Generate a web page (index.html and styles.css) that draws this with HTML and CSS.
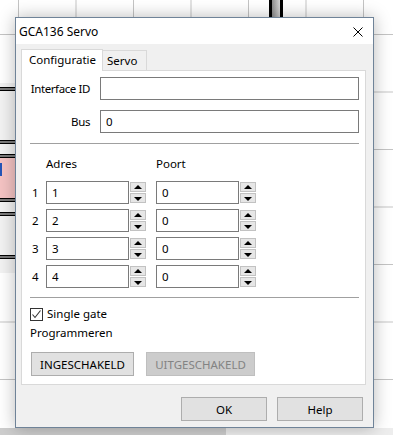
FILE: index.html
```html
<!DOCTYPE html>
<html lang="nl">
<head>
    <meta charset="UTF-8">
    <meta name="viewport" content="width=device-width, initial-scale=1.0">
    <title>GCA136 Servo</title>
    <link rel="stylesheet" href="styles.css">
</head>
<body>
    <!-- track plan behind the dialog -->
    <div class="track-v"></div>
    <div class="edge-block">
        <div class="rail rail-1"></div>
        <div class="rail rail-2"></div>
        <div class="rail rail-3"></div>
        <div class="block-pink"><span class="block-nr"></span></div>
        <div class="rail rail-4"></div>
        <div class="rail rail-5"></div>
        <div class="rail rail-6"></div>
    </div>
    <div class="hscroll"></div>

    <div class="dialog">
        <div class="titlebar">
            <span class="title">GCA136 Servo</span>
            <svg class="close" width="10" height="10" viewBox="0 0 10 10">
                <path d="M0.5 0.5 L9.5 9.5 M9.5 0.5 L0.5 9.5" stroke="#000" stroke-width="1" fill="none"/>
            </svg>
        </div>

        <div class="dialog-body">
            <div class="tabs">
                <div class="tab active">Configuratie</div>
                <div class="tab">Servo</div>
            </div>

            <div class="panel">
                <div class="field-grid">
                    <label for="iid">Interface ID</label>
                    <input class="text" id="iid" type="text" value="">
                    <label for="bus">Bus</label>
                    <input class="text" id="bus" type="text" value="0">
                </div>

                <div class="sep"></div>

                <div class="addr-grid">
                    <span></span><span class="colhead">Adres</span><span></span><span class="colhead">Poort</span><span></span>

                    <span class="nr">1</span>
                    <input class="text" type="text" value="1">
                    <div class="spin"><span class="up"></span><span class="down"></span></div>
                    <input class="text" type="text" value="0">
                    <div class="spin"><span class="up"></span><span class="down"></span></div>

                    <span class="nr">2</span>
                    <input class="text" type="text" value="2">
                    <div class="spin"><span class="up"></span><span class="down"></span></div>
                    <input class="text" type="text" value="0">
                    <div class="spin"><span class="up"></span><span class="down"></span></div>

                    <span class="nr">3</span>
                    <input class="text" type="text" value="3">
                    <div class="spin"><span class="up"></span><span class="down"></span></div>
                    <input class="text" type="text" value="0">
                    <div class="spin"><span class="up"></span><span class="down"></span></div>

                    <span class="nr">4</span>
                    <input class="text" type="text" value="4">
                    <div class="spin"><span class="up"></span><span class="down"></span></div>
                    <input class="text" type="text" value="0">
                    <div class="spin"><span class="up"></span><span class="down"></span></div>
                </div>

                <div class="sep sep-2"></div>

                <label class="check">
                    <span class="box">
                        <svg width="11" height="11" viewBox="0 0 11 11">
                            <path d="M1.5 5.5 L4 8.5 L9.5 1.5" stroke="#333" stroke-width="1.1" fill="none"/>
                        </svg>
                    </span>
                    Single gate
                </label>
                <div class="prog-label">Programmeren</div>
                <div class="prog-buttons">
                    <button class="btn">INGESCHAKELD</button>
                    <button class="btn" disabled>UITGESCHAKELD</button>
                </div>
            </div>

            <div class="footer">
                <button class="btn btn-wide">OK</button>
                <button class="btn btn-wide">Help</button>
            </div>
        </div>
    </div>
</body>
</html>
```

FILE: styles.css
```css
body {
    margin: 0;
    width: 393px;
    height: 435px;
    overflow: hidden;
    position: relative;
    font-family: "Noto Sans", "Open Sans", sans-serif;
    font-size: 11.5px;
    color: #000;
    background-color: #fff;
    background-image:
        linear-gradient(to right, #c4c4c4 1px, transparent 1px),
        linear-gradient(to bottom, #c4c4c4 1px, transparent 1px);
    background-size: 57.5px 57.5px;
    background-position: 18px 34px;
}

/* Track plan pieces peeking out behind the dialog */
.track-v {
    position: absolute;
    left: 269px;
    top: 0;
    width: 8px;
    height: 17px;
    border-left: 3px solid #000;
    border-right: 3px solid #000;
    background: linear-gradient(to right, #8c8c8c, #d4d4d4);
}

.edge-block {
    position: absolute;
    left: 0;
    top: 83px;
    width: 15px;
    height: 190px;
    background: #f2f2f2;
}

.rail {
    position: absolute;
    left: 0;
    width: 15px;
    height: 2px;
    border-top: 1px solid #000;
    border-bottom: 1px solid #000;
    background: #7a7a7a;
}

.rail-1 { top: 4px; }
.rail-2 { top: 57px; }
.rail-3 { top: 71px; }
.rail-4 { top: 115px; }
.rail-5 { top: 129px; }
.rail-6 { top: 172px; }

.block-pink {
    position: absolute;
    left: 0;
    top: 75px;
    width: 15px;
    height: 40px;
    background: #f4c3c3;
}

/* only the right stem of the block number shows */
.block-nr {
    position: absolute;
    left: 0;
    top: 5px;
    width: 2px;
    height: 13px;
    background: #2456b8;
}

.hscroll {
    position: absolute;
    left: 0;
    top: 428px;
    width: 393px;
    height: 7px;
    background: linear-gradient(to right, #cdcdcd 226px, #ededed 226px);
}

/* Dialog window */
.dialog {
    position: absolute;
    left: 15px;
    top: 17px;
    width: 359px;
    height: 411px;
    box-sizing: border-box;
    border: 1px solid #6f8398;
    background: #f0f0f0;
    box-shadow: 0 0 16px rgba(0, 0, 0, 0.28);
    display: flex;
    flex-direction: column;
}

.titlebar {
    height: 26px;
    background: #fff;
    display: flex;
    align-items: center;
    justify-content: space-between;
    padding: 0 10px 0 3px;
    font-size: 12px;
}

.close {
    display: block;
    margin-top: 1px;
}

.dialog-body {
    flex: 1;
    padding: 5px 7px 0 5px;
}

.tabs {
    display: flex;
    align-items: flex-end;
    height: 21px;
}

.tab {
    box-sizing: border-box;
    height: 20px;
    width: 44px;
    padding-left: 4px;
    border: 1px solid #d9d9d9;
    border-bottom: none;
    border-left: none;
    background: #f0f0f0;
    line-height: 19px;
}

.tab.active {
    position: relative;
    z-index: 1;
    width: 82px;
    height: 22px;
    margin-bottom: -1px;
    padding-left: 7px;
    border-left: 1px solid #d9d9d9;
    background: #fff;
    line-height: 19px;
}

.panel {
    box-sizing: border-box;
    width: 345px;
    height: 315px;
    border: 1px solid #d9d9d9;
    background: #fff;
    padding: 6px 6px 0 8px;
}

.field-grid {
    display: grid;
    grid-template-columns: 60px 259px;
    column-gap: 10px;
    row-gap: 10px;
    align-items: center;
}

.field-grid label {
    text-align: right;
    white-space: nowrap;
    letter-spacing: -0.4px;
}

input.text {
    box-sizing: border-box;
    height: 23px;
    width: 100%;
    margin: 0;
    border: 1px solid #7a7a7a;
    padding: 0 0 0 5px;
    font-family: inherit;
    font-size: 11.5px;
    color: #000;
    background: #fff;
    outline: none;
}

.sep {
    height: 1px;
    width: 329px;
    background: #a0a0a0;
    margin-top: 10px;
}

.addr-grid {
    display: grid;
    grid-template-columns: 16px 83px 27px 83px 17px;
    row-gap: 5px;
    align-items: center;
    margin-top: 10px;
}

.colhead {
    line-height: 16px;
    margin: 2px 0 4px;
}

.nr {
    padding-left: 2px;
}

.spin {
    box-sizing: border-box;
    width: 16px;
    height: 23px;
    margin-left: 1px;
    padding: 1px 0;
    display: flex;
    flex-direction: column;
    gap: 1px;
}

.spin span {
    position: relative;
    flex: 1;
    border: 1px solid #c2c2c2;
    background: #e6e6e6;
}

.spin span::after {
    content: "";
    position: absolute;
    left: 3px;
    top: 2px;
    border-left: 4px solid transparent;
    border-right: 4px solid transparent;
}

.spin .up::after {
    border-bottom: 4px solid #000;
}

.spin .down::after {
    top: 3px;
    border-top: 4px solid #000;
}

.sep-2 {
    margin-top: 9px;
}

.check {
    display: flex;
    align-items: center;
    gap: 4px;
    margin-top: 8px;
    line-height: 16px;
}

.box {
    box-sizing: border-box;
    width: 13px;
    height: 13px;
    border: 1px solid #333;
    display: flex;
    align-items: center;
    justify-content: center;
}

.box svg {
    display: block;
}

.prog-label {
    margin-top: 3px;
    line-height: 16px;
}

.prog-buttons {
    display: flex;
    gap: 12px;
    margin-top: 11px;
    padding-left: 1px;
}

.btn {
    box-sizing: border-box;
    height: 24px;
    padding: 0 8px;
    border: 1px solid #adadad;
    background: #e1e1e1;
    font-family: inherit;
    font-size: 11.5px;
    color: #000;
}

.prog-buttons .btn:first-child {
    width: 103px;
}

.prog-buttons .btn:last-child {
    width: 109px;
}

.btn:disabled {
    background: #cccccc;
    border-color: #bfbfbf;
    color: #838383;
}

.footer {
    display: flex;
    justify-content: flex-end;
    gap: 10px;
    margin-top: 12px;
    padding-right: 3px;
}

.btn-wide {
    width: 86px;
}
```
